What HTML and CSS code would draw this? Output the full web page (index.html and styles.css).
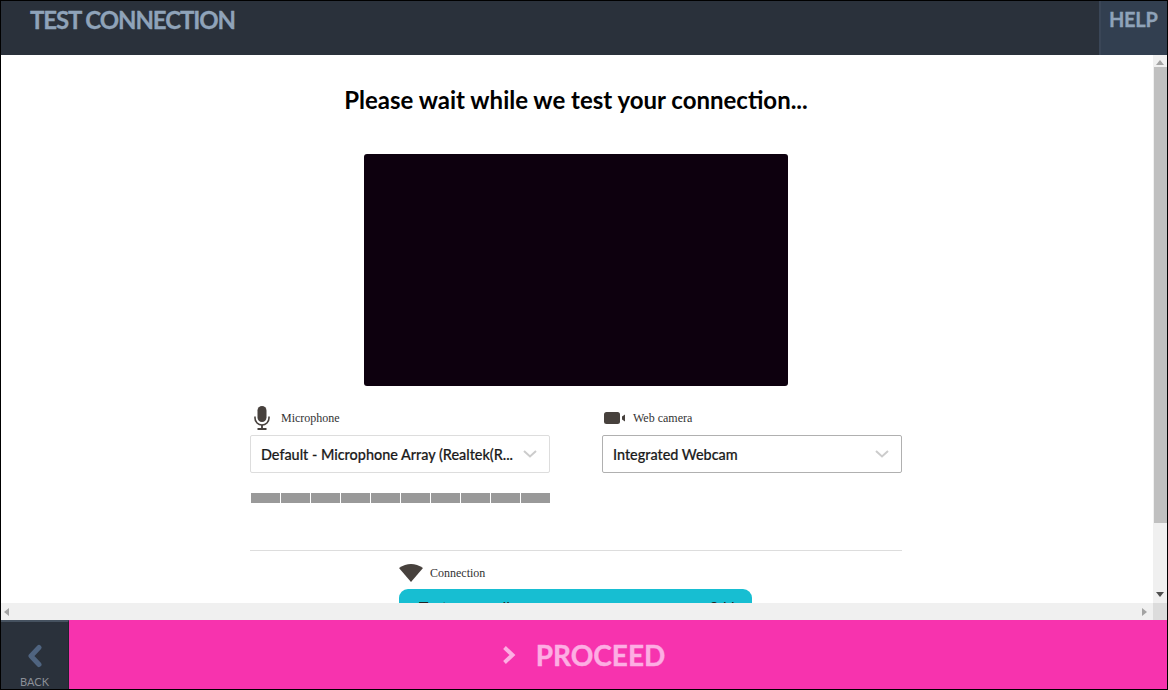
FILE: index.html
```html
<!DOCTYPE html>
<html>
  <head>
    <meta charset="utf-8">
    <meta name="viewport" content="width=device-width, initial-scale=1">
    <title>Test Connection</title>
    <link rel="stylesheet" href="styles.css">
  </head>
  <body>
    <div class="app">
      <header class="topbar">
        <div class="page-name">TEST CONNECTION</div>
        <div class="help">HELP</div>
      </header>

      <div class="viewport">
        <div class="scroll-row">
          <main class="content">
            <h1 class="heading">Please wait while we test your connection...</h1>
            <div class="video"></div>

            <div class="devices">
              <div class="device">
                <div class="device-label">
                  <svg class="icon-mic" viewBox="0 0 16 24" width="16" height="24">
                    <rect x="3.5" y="0" width="9" height="16" rx="4.5" fill="#47413d"/>
                    <path d="M1 10.5v1.5a7 7 0 0 0 14 0v-1.5" fill="none" stroke="#47413d" stroke-width="1.6"/>
                    <path d="M8 19v3.5M3.5 23h9" fill="none" stroke="#47413d" stroke-width="1.8"/>
                  </svg>
                  <span>Microphone</span>
                </div>
                <div class="select">
                  <span class="select-text">Default - Microphone Array (Realtek(R...</span>
                  <svg class="chevron" viewBox="0 0 14 8" width="14" height="8">
                    <path d="M1 1l6 5.5 6-5.5" fill="none" stroke="#ccc" stroke-width="2"/>
                  </svg>
                </div>
                <div class="level">
                  <i></i><i></i><i></i><i></i><i></i><i></i><i></i><i></i><i></i><i></i>
                </div>
              </div>

              <div class="device">
                <div class="device-label device-label-cam">
                  <svg class="icon-cam" viewBox="0 0 22 12" width="22" height="12">
                    <rect x="0" y="0" width="16" height="12" rx="2.5" fill="#47413d"/>
                    <path d="M18 4.5l3-2v7l-3-2z" fill="#47413d"/>
                  </svg>
                  <span>Web camera</span>
                </div>
                <div class="select select-active">
                  <span class="select-text">Integrated Webcam</span>
                  <svg class="chevron" viewBox="0 0 14 8" width="14" height="8">
                    <path d="M1 1l6 5.5 6-5.5" fill="none" stroke="#ccc" stroke-width="2"/>
                  </svg>
                </div>
              </div>
            </div>

            <hr class="divider">

            <div class="connection">
              <div class="device-label">
                <svg class="icon-wifi" viewBox="0 0 24 18" width="24" height="18">
                  <path d="M0 4Q12 -4 24 4L12 18z" fill="#47413d"/>
                </svg>
                <span>Connection</span>
              </div>
              <div class="status">
                <span class="status-text">Test your call</span>
                <span class="status-text">0 kb</span>
              </div>
            </div>
          </main>

          <div class="scrollbar-v">
            <svg class="arrow" viewBox="0 0 8 5" width="8" height="5"><path d="M4 0l4 5H0z" fill="#a3a3a3"/></svg>
            <div class="thumb-v"></div>
            <svg class="arrow" viewBox="0 0 8 5" width="8" height="5"><path d="M0 0h8L4 5z" fill="#505050"/></svg>
          </div>
        </div>

        <div class="scrollbar-h">
          <svg class="arrow" viewBox="0 0 5 8" width="5" height="8"><path d="M5 0v8L0 4z" fill="#a3a3a3"/></svg>
          <svg class="arrow" viewBox="0 0 5 8" width="5" height="8"><path d="M0 0l5 4-5 4z" fill="#a3a3a3"/></svg>
          <div class="scroll-corner"></div>
        </div>
      </div>

      <footer class="bottombar">
        <div class="back">
          <svg class="back-arrow" viewBox="0 0 16 24" width="16" height="24">
            <path d="M12 3.500L4 12l8 8.500" fill="none" stroke="#4f6480" stroke-width="5" stroke-linecap="round" stroke-linejoin="round"/>
          </svg>
          <span>BACK</span>
        </div>
        <div class="proceed">
          <svg class="proceed-arrow" viewBox="0 0 13 18" width="13" height="18">
            <path d="M1.500 1.500L9.500 9l-8 7.500" fill="none" stroke="#fdaee3" stroke-width="4"/>
          </svg>
          <span>PROCEED</span>
        </div>
      </footer>
    </div>
  </body>
</html>
```

FILE: styles.css
```css
* {
  box-sizing: border-box;
  font-family: "Lato", sans-serif;
}

body {
  margin: 0;
  overflow: hidden;
}

.app {
  display: flex;
  flex-direction: column;
  width: 1168px;
  height: 690px;
  border: 1px solid #000;
  background-color: #fff;
}

.topbar {
  display: flex;
  justify-content: space-between;
  flex: none;
  height: 54px;
  background-color: #2a313b;
}

.page-name {
  padding: 4px 0 0 29px;
  font-size: 24px;
  line-height: 29px;
  font-weight: bold;
  letter-spacing: -1.1px;
  color: #8fa3b9;
  -webkit-text-stroke: 0.3px #8fa3b9;
}

.help {
  width: 68px;
  padding: 5px 0 0 8px;
  border-left: 2px solid #3a4657;
  background-color: #323f50;
  font-size: 20px;
  line-height: 26px;
  font-weight: bold;
  letter-spacing: -0.3px;
  color: #8fa3b9;
  -webkit-text-stroke: 0.3px #8fa3b9;
}

.viewport {
  display: flex;
  flex-direction: column;
  flex: 1;
  min-height: 0;
}

.scroll-row {
  display: flex;
  flex: 1;
  min-height: 0;
}

.content {
  flex: 1;
  overflow: hidden;
  padding: 28px 2px 0 0;
}

.heading {
  margin: 0;
  text-align: center;
  font-size: 24px;
  line-height: 34px;
  font-weight: bold;
  color: #000;
}

.video {
  width: 424px;
  height: 232px;
  margin: 37px auto 0;
  border-radius: 3px;
  background-color: #0d000e;
}

.devices {
  display: flex;
  justify-content: space-between;
  width: 652px;
  height: 144px;
  margin: 20px auto 0;
}

.device {
  width: 300px;
}

.device-label {
  display: flex;
  align-items: center;
  height: 24px;
  margin-bottom: 5px;
  padding-left: 4px;
}

.device-label span {
  margin-left: 11px;
  font-family: "Liberation Serif", serif;
  font-size: 12px;
  color: #333;
}

.device-label-cam {
  padding-left: 2px;
}

.device-label-cam span {
  margin-left: 7px;
}

.select {
  display: flex;
  align-items: center;
  justify-content: space-between;
  height: 38px;
  padding: 0 12px 0 10px;
  border: 1px solid #ddd;
  border-radius: 2px;
  background-color: #fff;
}

.select-active {
  border-color: #b0b0b0;
}

.select-text {
  font-size: 14.4px;
  font-weight: 500;
  color: #1b1b1b;
  white-space: nowrap;
  -webkit-text-stroke: 0.2px #1b1b1b;
}

.level {
  display: flex;
  gap: 1px;
  height: 10px;
  margin-top: 20px;
  padding-left: 1px;
}

.level i {
  flex: 1;
  background-color: #999;
}

.divider {
  width: 652px;
  height: 1px;
  margin: 0 auto;
  border: none;
  background-color: #ddd;
}

.connection {
  width: 353px;
  margin: 10px 0 0 398px;
}

.connection .device-label {
  padding-left: 0;
  margin-bottom: 4px;
}

.connection .device-label span {
  margin-left: 7px;
}

.status {
  display: flex;
  justify-content: space-between;
  height: 60px;
  padding: 8px 12px 0 20px;
  border-radius: 9px;
  background-color: #17bed2;
}

.status-text {
  font-size: 16px;
  line-height: 19px;
  color: #222;
}

.scrollbar-v {
  display: flex;
  flex-direction: column;
  align-items: center;
  justify-content: space-between;
  flex: none;
  width: 14px;
  padding: 5px 0 6px;
  background-color: #f0f0f0;
}

.thumb-v {
  flex: none;
  width: 13px;
  height: 456px;
  margin: 2px 0 auto 1px;
  background-color: #c0c0c0;
}

.scrollbar-h {
  display: flex;
  align-items: center;
  justify-content: space-between;
  flex: none;
  height: 17px;
  padding-left: 3px;
  background-color: #f0f0f0;
}

.scrollbar-h .arrow:nth-child(2) {
  margin-left: auto;
  margin-right: 6px;
}

.scroll-corner {
  width: 14px;
  height: 17px;
  background-color: #dcdcdc;
}

.bottombar {
  display: flex;
  flex: none;
  height: 69px;
}

.back {
  display: flex;
  flex-direction: column;
  align-items: center;
  flex: none;
  width: 68px;
  padding-top: 22px;
  border-top: 2px solid #465260;
  border-right: 1px solid #20262e;
  background-color: #2a313b;
}

.back span {
  margin-top: 7px;
  font-size: 11px;
  line-height: 14px;
  color: #8b8f97;
}

.proceed {
  display: flex;
  align-items: center;
  justify-content: center;
  flex: 1;
  gap: 20px;
  padding-right: 68px;
  background-color: #f733ae;
  font-size: 28px;
  font-weight: bold;
  color: #fdaee3;
  -webkit-text-stroke: 0.4px #fdaee3;
}
```
